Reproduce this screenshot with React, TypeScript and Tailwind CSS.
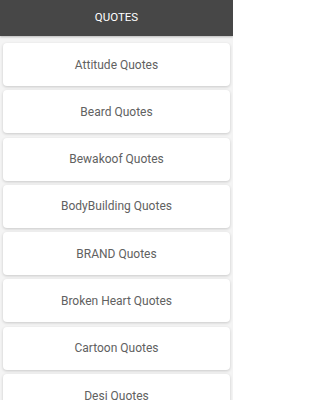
const CATEGORIES = [
  "Attitude Quotes",
  "Beard Quotes",
  "Bewakoof Quotes",
  "BodyBuilding Quotes",
  "BRAND Quotes",
  "Broken Heart Quotes",
  "Cartoon Quotes",
  "Desi Quotes",
];

export default function App() {
  return (
    <div
      className="flex h-[400px] w-[233px] flex-col overflow-hidden bg-[#f4f4f4]"
      style={{ fontFamily: "Roboto, 'Noto Sans', sans-serif" }}
    >
      <header className="flex h-[36px] flex-shrink-0 items-center justify-center bg-[#474747] shadow-[0_1px_2px_rgba(0,0,0,0.25)]">
        <span className="text-[11.5px] text-white">QUOTES</span>
      </header>

      <div className="flex flex-col gap-[4.3px] px-[3px] pt-[7px]">
        {CATEGORIES.map((name) => (
          <button
            key={name}
            className="flex h-[43px] flex-shrink-0 items-center justify-center rounded-[4px] bg-white text-[12px] text-[#616161] shadow-[0_1px_3px_rgba(0,0,0,0.18)]"
          >
            {name}
          </button>
        ))}
      </div>
    </div>
  );
}
